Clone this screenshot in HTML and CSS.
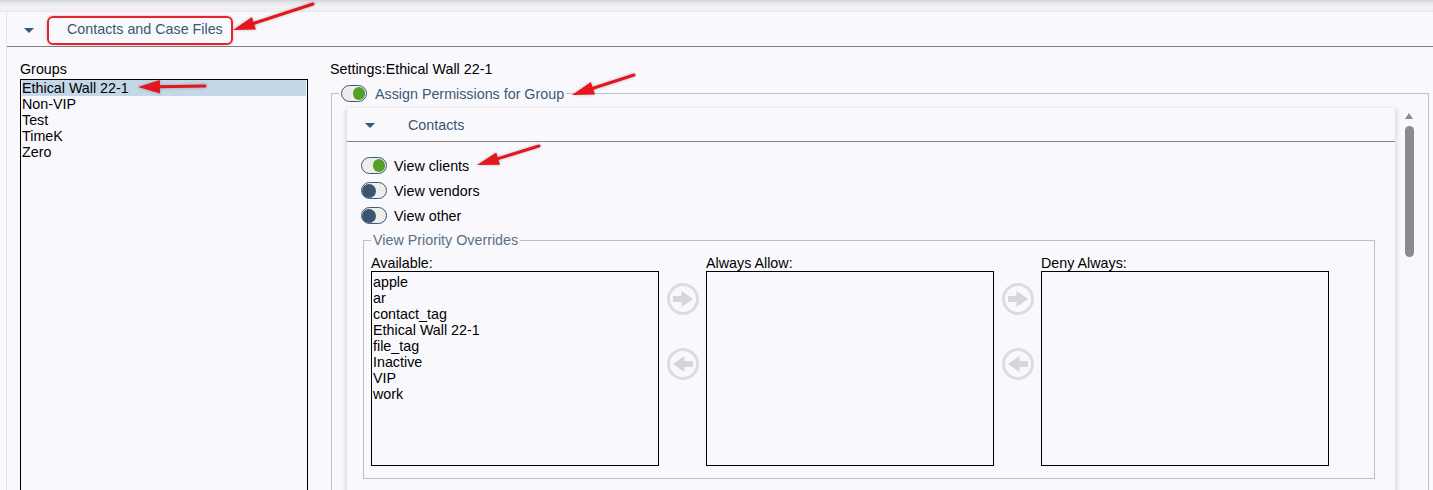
FILE: index.html
```html
<!DOCTYPE html>
<html>
<head>
<meta charset="utf-8">
<title>Contacts and Case Files</title>
<link rel="stylesheet" href="styles.css">
</head>
<body>
<div class="topbar"></div>
<section class="panel">
  <header class="panel-head">
    <span class="caret"></span>
    <span class="title-box">Contacts and Case Files</span>
  </header>
  <div class="panel-body">
    <div class="groups">
      <div class="label groups-label">Groups</div>
      <ul class="listbox groups-list">
        <li class="selected">Ethical Wall 22-1</li>
        <li>Non-VIP</li>
        <li>Test</li>
        <li>TimeK</li>
        <li>Zero</li>
      </ul>
    </div>
    <div class="settings">
      <div class="label settings-label">Settings:Ethical Wall 22-1</div>
      <fieldset class="perm">
        <legend class="perm-legend"><span class="toggle on"><span class="knob"></span></span><span>Assign Permissions for Group</span></legend>
        <div class="scroll-area">
          <div class="inner">
            <div class="sub-head"><span class="caret"></span><span class="sub-title">Contacts</span></div>
            <div class="sub-body">
              <div class="toggle-row"><span class="toggle on"><span class="knob"></span></span><span>View clients</span></div>
              <div class="toggle-row"><span class="toggle off"><span class="knob"></span></span><span>View vendors</span></div>
              <div class="toggle-row"><span class="toggle off"><span class="knob"></span></span><span>View other</span></div>
              <fieldset class="overrides">
                <legend class="overrides-legend">View Priority Overrides</legend>
                <div class="transfer">
                  <div class="tcol">
                    <div class="label">Available:</div>
                    <ul class="listbox tbox">
                      <li>apple</li>
                      <li>ar</li>
                      <li>contact_tag</li>
                      <li>Ethical Wall 22-1</li>
                      <li>file_tag</li>
                      <li>Inactive</li>
                      <li>VIP</li>
                      <li>work</li>
                    </ul>
                  </div>
                  <div class="tbtns">
                    <svg class="circ-btn" width="32" height="32" viewBox="0 0 32 32"><circle cx="16" cy="16" r="14.5" fill="none" stroke="#dcdcde" stroke-width="3"/><polygon points="6,13 14.5,13 14.5,8 26,16 14.5,24 14.5,19 6,19" fill="#d6d6d8"/></svg>
                    <svg class="circ-btn" width="32" height="32" viewBox="0 0 32 32"><circle cx="16" cy="16" r="14.5" fill="none" stroke="#dcdcde" stroke-width="3"/><polygon points="26,13 17.5,13 17.5,8 6,16 17.5,24 17.5,19 26,19" fill="#d6d6d8"/></svg>
                  </div>
                  <div class="tcol">
                    <div class="label">Always Allow:</div>
                    <ul class="listbox tbox"></ul>
                  </div>
                  <div class="tbtns">
                    <svg class="circ-btn" width="32" height="32" viewBox="0 0 32 32"><circle cx="16" cy="16" r="14.5" fill="none" stroke="#dcdcde" stroke-width="3"/><polygon points="6,13 14.5,13 14.5,8 26,16 14.5,24 14.5,19 6,19" fill="#d6d6d8"/></svg>
                    <svg class="circ-btn" width="32" height="32" viewBox="0 0 32 32"><circle cx="16" cy="16" r="14.5" fill="none" stroke="#dcdcde" stroke-width="3"/><polygon points="26,13 17.5,13 17.5,8 6,16 17.5,24 17.5,19 26,19" fill="#d6d6d8"/></svg>
                  </div>
                  <div class="tcol">
                    <div class="label">Deny Always:</div>
                    <ul class="listbox tbox"></ul>
                  </div>
                </div>
              </fieldset>
            </div>
          </div>
          <div class="vscroll"><span class="up"></span><span class="thumb"></span></div>
        </div>
      </fieldset>
    </div>
  </div>
</section>
<svg class="annotations" width="1433" height="490" viewBox="0 0 1433 490">
  <g class="arrow">
    <line x1="313" y1="4" x2="254" y2="23.2"/>
    <polygon points="233,30 255.9,29.4 251.9,17"/>
  </g>
  <g class="arrow">
    <line x1="205" y1="86" x2="159" y2="86.7"/>
    <polygon points="138,87 160.1,93.5 159.9,80"/>
  </g>
  <g class="arrow">
    <line x1="634" y1="75" x2="593" y2="88.2"/>
    <polygon points="572,95 594.9,94.4 590.9,82"/>
  </g>
  <g class="arrow">
    <line x1="539" y1="146" x2="498" y2="158.6"/>
    <polygon points="477,165 500,164.8 496.2,152.4"/>
  </g>
</svg>
</body>
</html>
```
FILE: styles.css
```css
* {
  box-sizing: border-box;
}

body {
  margin: 0;
  height: 490px;
  overflow: hidden;
  position: relative;
  background: #fafafb;
  font-family: "Liberation Sans", Arial, sans-serif;
  font-size: 14.3px;
  color: #000;
}

.topbar {
  height: 12px;
  background: linear-gradient(#d2d2d7 0, #e8e8ec 3px, #f1f1f4 6px, #f1f1f4 10px, #e8e8ec 12px);
}

.panel {
  margin-left: 6px;
  height: 478px;
  border-left: 1px solid #e3e3e8;
  background: #f9f9fd;
}

.panel-head {
  height: 35px;
  display: flex;
  align-items: flex-start;
  padding-left: 17px;
  border-bottom: 1px solid #7d7d85;
}

.caret {
  flex: none;
  width: 0;
  height: 0;
  border-left: 5px solid transparent;
  border-right: 5px solid transparent;
  border-top: 5px solid #3a5570;
}

.panel-head .caret {
  margin-top: 16px;
}

.title-box {
  display: block;
  margin-left: 13px;
  margin-top: 4px;
  height: 29px;
  padding: 0 8px 0 18px;
  border: 2px solid #e3262d;
  border-radius: 6px;
  line-height: 22px;
  color: #3a5673;
  box-shadow: 0 0 3px rgba(227, 38, 45, 0.35);
}

.panel-body {
  display: flex;
  gap: 22px;
  padding: 14px 4px 0 13px;
}

.groups {
  flex: none;
  width: 288px;
}

.label {
  height: 16px;
  line-height: 16px;
  white-space: nowrap;
}

.groups-label {
  margin-bottom: 2px;
}

.listbox {
  list-style: none;
  margin: 0;
  padding: 0 1px;
  border: 1px solid #000;
}

.listbox li {
  height: 16px;
  line-height: 16px;
  white-space: nowrap;
}

.groups-list {
  height: 430px;
}

.selected {
  background: #c4d7e7;
}

.settings {
  flex: 1;
  min-width: 0;
}

.settings-label {
  margin-bottom: 8px;
}

.perm {
  margin: 0 0 0 1px;
  padding: 0;
  min-width: 0;
  border: 1px solid #c1c1c7;
}

.perm-legend {
  margin-left: 7px;
  padding: 0 2px;
  height: 17px;
  display: flex;
  align-items: center;
  gap: 8px;
  color: #3d5874;
}

.scroll-area {
  display: flex;
  padding: 6px 7px 0 15px;
}

.inner {
  flex: 1;
  min-width: 0;
  background: #f9f9fd;
  padding-bottom: 40px;
  box-shadow: -3px 0 4px -1px rgba(0, 0, 0, 0.12), 3px 0 4px -1px rgba(0, 0, 0, 0.12);
}

.sub-head {
  height: 34px;
  display: flex;
  align-items: center;
  padding-left: 18px;
  border-bottom: 1px solid #85858c;
}

.sub-head .caret {
  margin-top: 2px;
}

.sub-title {
  margin-left: 33px;
  color: #3a5673;
}

.sub-body {
  padding: 11px 20px 0 14px;
}

.toggle-row {
  height: 25px;
  display: flex;
  align-items: center;
  gap: 7px;
}

.toggle {
  flex: none;
  width: 26px;
  height: 17px;
  display: flex;
  align-items: center;
  border: 1.5px solid #3e5772;
  border-radius: 9px;
  background: #ededee;
}

.toggle.on {
  justify-content: flex-end;
  padding-right: 1px;
}

.toggle .knob {
  display: block;
  border-radius: 50%;
}

.toggle.on .knob {
  width: 12.5px;
  height: 12.5px;
  background: #55a029;
}

.toggle.off .knob {
  width: 14px;
  height: 14px;
  background: #3b5571;
}

.overrides {
  margin: 4px 0 0 2px;
  padding: 0;
  min-width: 0;
  border: 1px solid #bebec4;
}

.overrides-legend {
  margin-left: 7px;
  padding: 0 2px;
  line-height: 16px;
  color: #5b6e83;
}

.transfer {
  display: flex;
  padding: 7px 7px 12px 7px;
}

.tcol {
  flex: none;
  width: 288px;
}

.tbox {
  height: 195px;
  padding-top: 2px;
}

.tbtns {
  flex: none;
  width: 47px;
  display: flex;
  flex-direction: column;
  align-items: center;
  gap: 33px;
  padding-top: 28px;
}

.circ-btn {
  display: block;
}

.vscroll {
  flex: none;
  width: 26px;
  display: flex;
  flex-direction: column;
  align-items: flex-start;
  padding: 5px 0 0 10px;
}

.vscroll .up {
  width: 0;
  height: 0;
  border-left: 4.5px solid transparent;
  border-right: 4.5px solid transparent;
  border-bottom: 6px solid #8b8b8b;
}

.vscroll .thumb {
  margin-top: 7px;
  width: 9px;
  height: 131px;
  border-radius: 5px;
  background: #8b8b8b;
}

.annotations {
  position: absolute;
  top: 0;
  left: 0;
  pointer-events: none;
  filter: drop-shadow(0 0 1.5px rgba(0, 0, 0, 0.25));
}

.arrow line {
  stroke: #e5161d;
  stroke-width: 3;
  stroke-linecap: round;
}

.arrow polygon {
  fill: #e5161d;
}
```
